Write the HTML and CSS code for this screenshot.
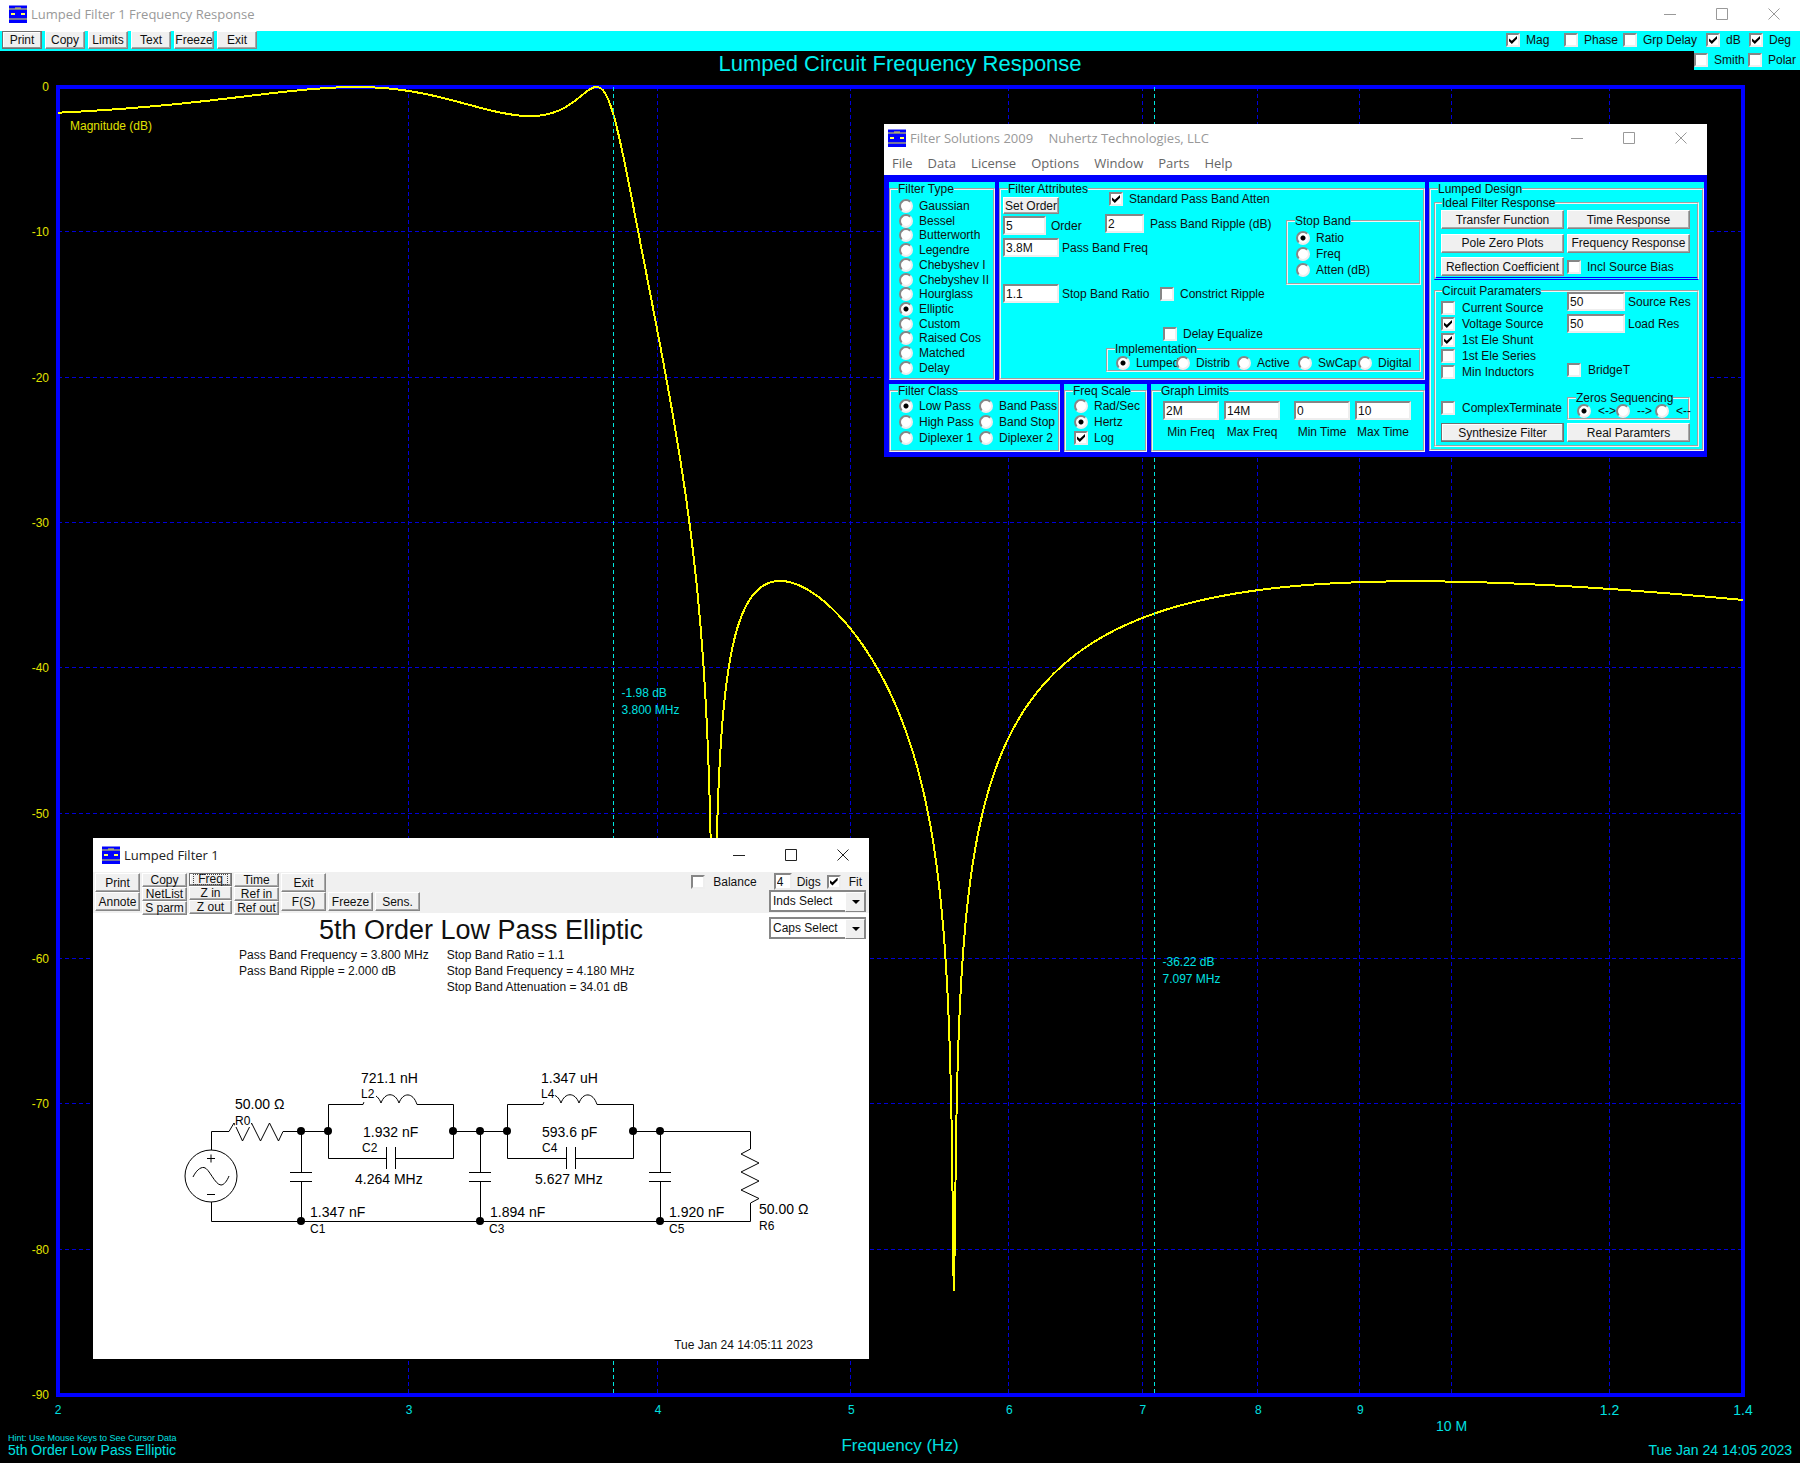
FILE: index.html
```
<!DOCTYPE html>
<html lang="en">

<head>
    <meta charset="UTF-8">
    <title>Lumped Filter 1 Frequency Response</title>
    <link rel="stylesheet" href="styles.css">
</head>

<body>
    <svg class="sprites" aria-hidden="true">
        <symbol id="icon-app" viewBox="0 0 18 18">
            <rect width="18" height="18" fill="#0000ff" />
            <path d="M0 .500h18" fill="none" stroke="#8080ff" />
            <path d="M0 4h18M0 14h18M6 3h6" fill="none" stroke="#e8e840" />
            <path d="M2 8h4v2H2zM12 8h4v2h-4z" fill="#ffff60" />
        </symbol>
        <symbol id="icon-min" viewBox="0 0 12 12">
            <path d="M0 6.500h12" fill="none" stroke="currentColor" />
        </symbol>
        <symbol id="icon-max" viewBox="0 0 12 12">
            <path d="M.5.5h11v11H.5z" fill="none" stroke="currentColor" />
        </symbol>
        <symbol id="icon-close" viewBox="0 0 12 12">
            <path d="M.5.500l11 11M11.500.500l-11 11" fill="none" stroke="currentColor" />
        </symbol>
    </svg>

    <!-- Frequency response window -->
    <main class="desktop">
        <header class="titlebar titlebar-main inactive">
            <svg class="app-icon"><use href="#icon-app" /></svg>
            <h1 class="window-title">Lumped Filter 1 Frequency Response</h1>
            <div class="window-controls">
                <button aria-label="Minimize"><svg><use href="#icon-min" /></svg></button>
                <button aria-label="Maximize"><svg><use href="#icon-max" /></svg></button>
                <button aria-label="Close"><svg><use href="#icon-close" /></svg></button>
            </div>
        </header>

        <div class="toolbar">
            <div class="toolbar-buttons">
                <button class="btn btn-default">Print</button>
                <button class="btn">Copy</button>
                <button class="btn">Limits</button>
                <button class="btn">Text</button>
                <button class="btn">Freeze</button>
                <button class="btn">Exit</button>
            </div>
            <div class="trace-options">
                <label class="opt"><input type="checkbox" checked>Mag</label>
                <label class="opt"><input type="checkbox">Phase</label>
                <label class="opt"><input type="checkbox">Grp Delay</label>
                <label class="opt"><input type="checkbox" checked>dB</label>
                <label class="opt"><input type="checkbox" checked>Deg</label>
            </div>
            <div class="plot-options">
                <label class="opt"><input type="checkbox">Smith</label>
                <label class="opt"><input type="checkbox">Polar</label>
            </div>
        </div>

        <section class="plot">
            <h2 class="plot-title">Lumped Circuit Frequency Response</h2>
            <svg id="chart" class="chart"></svg>
            <footer class="plot-footer">
                <div>
                    <p class="hint">Hint: Use Mouse Keys to See Cursor Data</p>
                    <p>5th Order Low Pass Elliptic</p>
                </div>
                <p class="axis-title">Frequency (Hz)</p>
                <p class="stamp">Tue Jan 24 14:05 2023</p>
            </footer>
        </section>
    </main>

    <!-- Filter Solutions window -->
    <section class="window solutions">
        <header class="titlebar inactive">
            <svg class="app-icon"><use href="#icon-app" /></svg>
            <h2 class="window-title">Filter Solutions 2009 <span class="company">Nuhertz Technologies, LLC</span></h2>
            <div class="window-controls">
                <button aria-label="Minimize"><svg><use href="#icon-min" /></svg></button>
                <button aria-label="Maximize"><svg><use href="#icon-max" /></svg></button>
                <button aria-label="Close"><svg><use href="#icon-close" /></svg></button>
            </div>
        </header>
        <nav class="menu">
            <a href="#">File</a>
            <a href="#">Data</a>
            <a href="#">License</a>
            <a href="#">Options</a>
            <a href="#">Window</a>
            <a href="#">Parts</a>
            <a href="#">Help</a>
        </nav>

        <div class="solutions-body">
            <div class="solutions-left">
                <div class="row-top">
                    <div class="panel">
                        <fieldset class="group filter-type">
                            <legend>Filter Type</legend>
                            <label class="opt"><input type="radio" name="type">Gaussian</label>
                            <label class="opt"><input type="radio" name="type">Bessel</label>
                            <label class="opt"><input type="radio" name="type">Butterworth</label>
                            <label class="opt"><input type="radio" name="type">Legendre</label>
                            <label class="opt"><input type="radio" name="type">Chebyshev I</label>
                            <label class="opt"><input type="radio" name="type">Chebyshev II</label>
                            <label class="opt"><input type="radio" name="type">Hourglass</label>
                            <label class="opt"><input type="radio" name="type" checked>Elliptic</label>
                            <label class="opt"><input type="radio" name="type">Custom</label>
                            <label class="opt"><input type="radio" name="type">Raised Cos</label>
                            <label class="opt"><input type="radio" name="type">Matched</label>
                            <label class="opt"><input type="radio" name="type">Delay</label>
                        </fieldset>
                    </div>

                    <div class="panel">
                        <fieldset class="group attributes">
                            <legend>Filter Attributes</legend>
                            <div class="attr-top">
                                <div class="attr-col">
                                    <button class="btn btn-order">Set Order</button>
                                    <label class="field field-order"><input class="text short" type="text" value="5">Order</label>
                                    <label class="field"><input class="text" type="text" value="3.8M">Pass Band Freq</label>
                                </div>
                                <div class="attr-col attr-ripple">
                                    <label class="opt"><input type="checkbox" checked>Standard Pass Band Atten</label>
                                    <label class="field"><input class="text ripple" type="text" value="2">Pass Band Ripple (dB)</label>
                                </div>
                                <fieldset class="group stop-band">
                                    <legend>Stop Band</legend>
                                    <label class="opt"><input type="radio" name="stop" checked>Ratio</label>
                                    <label class="opt"><input type="radio" name="stop">Freq</label>
                                    <label class="opt"><input type="radio" name="stop">Atten (dB)</label>
                                </fieldset>
                            </div>
                            <div class="attr-mid">
                                <label class="field"><input class="text" type="text" value="1.1">Stop Band Ratio</label>
                                <label class="opt"><input type="checkbox">Constrict Ripple</label>
                            </div>
                            <div class="attr-delay">
                                <label class="opt"><input type="checkbox">Delay Equalize</label>
                            </div>
                            <fieldset class="group implementation">
                                <legend>Implementation</legend>
                                <label class="opt"><input type="radio" name="impl" checked>Lumped</label>
                                <label class="opt"><input type="radio" name="impl">Distrib</label>
                                <label class="opt"><input type="radio" name="impl">Active</label>
                                <label class="opt"><input type="radio" name="impl">SwCap</label>
                                <label class="opt"><input type="radio" name="impl">Digital</label>
                            </fieldset>
                        </fieldset>
                    </div>
                </div>

                <div class="row-bottom">
                    <div class="panel">
                        <fieldset class="group filter-class">
                            <legend>Filter Class</legend>
                            <label class="opt"><input type="radio" name="class" checked>Low Pass</label>
                            <label class="opt"><input type="radio" name="class">Band Pass</label>
                            <label class="opt"><input type="radio" name="class">High Pass</label>
                            <label class="opt"><input type="radio" name="class">Band Stop</label>
                            <label class="opt"><input type="radio" name="class">Diplexer 1</label>
                            <label class="opt"><input type="radio" name="class">Diplexer 2</label>
                        </fieldset>
                    </div>
                    <div class="panel">
                        <fieldset class="group freq-scale">
                            <legend>Freq Scale</legend>
                            <label class="opt"><input type="radio" name="scale">Rad/Sec</label>
                            <label class="opt"><input type="radio" name="scale" checked>Hertz</label>
                            <label class="opt"><input type="checkbox" checked>Log</label>
                        </fieldset>
                    </div>
                    <div class="panel">
                        <fieldset class="group graph-limits">
                            <legend>Graph Limits</legend>
                            <div class="limits">
                                <label><input class="text" type="text" value="2M">Min Freq</label>
                                <label><input class="text" type="text" value="14M">Max Freq</label>
                            </div>
                            <div class="limits">
                                <label><input class="text" type="text" value="0">Min Time</label>
                                <label><input class="text" type="text" value="10">Max Time</label>
                            </div>
                        </fieldset>
                    </div>
                </div>
            </div>

            <div class="panel">
                <fieldset class="group design">
                    <legend>Lumped Design</legend>
                    <fieldset class="group ideal">
                        <legend>Ideal Filter Response</legend>
                        <button class="btn">Transfer Function</button>
                        <button class="btn">Time Response</button>
                        <button class="btn">Pole Zero Plots</button>
                        <button class="btn">Frequency Response</button>
                        <button class="btn">Reflection Coefficient</button>
                        <label class="opt"><input type="checkbox">Incl Source Bias</label>
                    </fieldset>
                    <fieldset class="group circuit">
                        <legend>Circuit Paramaters</legend>
                        <div class="circuit-col">
                            <label class="opt"><input type="checkbox">Current Source</label>
                            <label class="opt"><input type="checkbox" checked>Voltage Source</label>
                            <label class="opt"><input type="checkbox" checked>1st Ele Shunt</label>
                            <label class="opt"><input type="checkbox">1st Ele Series</label>
                            <label class="opt"><input type="checkbox">Min Inductors</label>
                            <label class="opt complex"><input type="checkbox">ComplexTerminate</label>
                            <button class="btn btn-default">Synthesize Filter</button>
                        </div>
                        <div class="circuit-col circuit-res">
                            <label class="field"><input class="text" type="text" value="50">Source Res</label>
                            <label class="field"><input class="text" type="text" value="50">Load Res</label>
                            <label class="opt bridge"><input type="checkbox">BridgeT</label>
                            <fieldset class="group zeros">
                                <legend>Zeros Sequencing</legend>
                                <label class="opt"><input type="radio" name="zeros" checked>&lt;-&gt;</label>
                                <label class="opt"><input type="radio" name="zeros">--&gt;</label>
                                <label class="opt"><input type="radio" name="zeros">&lt;--</label>
                            </fieldset>
                            <button class="btn">Real Paramters</button>
                        </div>
                    </fieldset>
                </fieldset>
            </div>
        </div>
    </section>

    <!-- Schematic window -->
    <section class="window schematic">
        <header class="titlebar">
            <svg class="app-icon"><use href="#icon-app" /></svg>
            <h2 class="window-title">Lumped Filter 1</h2>
            <div class="window-controls">
                <button aria-label="Minimize"><svg><use href="#icon-min" /></svg></button>
                <button aria-label="Maximize"><svg><use href="#icon-max" /></svg></button>
                <button aria-label="Close"><svg><use href="#icon-close" /></svg></button>
            </div>
        </header>

        <div class="schematic-bar">
            <div class="btn-col">
                <button class="btn">Print</button>
                <button class="btn">Annote</button>
            </div>
            <div class="btn-col btn-stack">
                <button class="btn">Copy</button>
                <button class="btn">NetList</button>
                <button class="btn">S parm</button>
            </div>
            <div class="btn-col btn-stack btn-narrow">
                <button class="btn btn-default btn-focus"><span>Freq</span></button>
                <button class="btn">Z in</button>
                <button class="btn">Z out</button>
            </div>
            <div class="btn-col btn-stack">
                <button class="btn">Time</button>
                <button class="btn">Ref in</button>
                <button class="btn">Ref out</button>
            </div>
            <div class="btn-col">
                <button class="btn">Exit</button>
                <button class="btn">F(S)</button>
            </div>
            <div class="btn-col btn-low">
                <button class="btn">Freeze</button>
            </div>
            <div class="btn-col btn-low">
                <button class="btn">Sens.</button>
            </div>
            <div class="schematic-options">
                <div class="fit-options">
                    <label class="opt balance"><input type="checkbox">Balance</label>
                    <label class="field"><input class="text digs" type="text" value="4">Digs</label>
                    <label class="opt"><input type="checkbox" checked>Fit</label>
                </div>
                <div class="select">
                    <select aria-label="Inductors">
                        <option>Inds Select</option>
                    </select>
                </div>
                <div class="select">
                    <select aria-label="Capacitors">
                        <option>Caps Select</option>
                    </select>
                </div>
            </div>
        </div>

        <h3 class="schematic-title">5th Order Low Pass Elliptic</h3>
        <div class="specs">
            <ul>
                <li>Pass Band Frequency = 3.800 MHz</li>
                <li>Pass Band Ripple = 2.000 dB</li>
            </ul>
            <ul>
                <li>Stop Band Ratio = 1.1</li>
                <li>Stop Band Frequency = 4.180 MHz</li>
                <li>Stop Band Attenuation = 34.01 dB</li>
            </ul>
        </div>

        <svg class="circuit-drawing" viewBox="0 0 776 190">
            <g class="wires">
                <!-- source and R0 -->
                <circle cx="118" cy="117" r="26" />
                <path d="M114 99.500h8M118 95.500v8M114 135.500h8" />
                <path d="M100 118C103 112 107 108 111 108.500C116 109 122 126 128 126C131 126 134 122 136 117" />
                <path d="M118.500 91V72.500H136L141 64L143 68L149.500 82L158.500 64L167.500 82L176.500 64L185.500 82L190 72.500H235" />
                <path d="M118.500 143V162.500H657.500V144L666 139.500L648 131L666 122L648 113L666 104L648 95L657.500 90V72.500H540" />
                <path d="M360 72.500H414" />
                <!-- L2 / C2 -->
                <path d="M293 99.500H235.500V45.500H270C274 33 284 33 288 44C292 33 302 33 306 44C310 33 320 33 324 45.500H360.500V99.500H303" />
                <path d="M293.500 88V110M302.500 88V110" />
                <!-- L4 / C4 -->
                <path d="M473 99.500H414.500V45.500H450C454 33 464 33 468 44C472 33 482 33 486 44C490 33 500 33 504 45.500H540.500V99.500H483" />
                <path d="M473.500 88V110M482.500 88V110" />
                <!-- C1, C3, C5 -->
                <path d="M208.500 72V113M197 113.500H219M197 122.500H219M208.500 122V162" />
                <path d="M387.500 72V113M376 113.500H398M376 122.500H398M387.500 122V162" />
                <path d="M567.500 72V113M556 113.500H578M556 122.500H578M567.500 122V162" />
            </g>
            <g class="label-masks">
                <rect x="142" y="56" width="16" height="12" />
                <rect x="269" y="30" width="14" height="13" />
                <rect x="448" y="30" width="14" height="13" />
            </g>
            <g class="nodes">
                <circle cx="208" cy="72" r="4" />
                <circle cx="235" cy="72" r="4" />
                <circle cx="360" cy="72" r="4" />
                <circle cx="387" cy="72" r="4" />
                <circle cx="414" cy="72" r="4" />
                <circle cx="540" cy="72" r="4" />
                <circle cx="567" cy="72" r="4" />
                <circle cx="208" cy="162" r="4" />
                <circle cx="387" cy="162" r="4" />
                <circle cx="567" cy="162" r="4" />
            </g>
            <g class="values">
                <text x="142" y="50">50.00 Ω</text>
                <text x="268" y="24">721.1 nH</text>
                <text x="270" y="78">1.932 nF</text>
                <text x="262" y="125">4.264 MHz</text>
                <text x="448" y="24">1.347 uH</text>
                <text x="449" y="78">593.6 pF</text>
                <text x="442" y="125">5.627 MHz</text>
                <text x="217" y="158">1.347 nF</text>
                <text x="397" y="158">1.894 nF</text>
                <text x="576" y="158">1.920 nF</text>
                <text x="666" y="155">50.00 Ω</text>
            </g>
            <g class="refs">
                <text x="142" y="66">R0</text>
                <text x="268" y="39">L2</text>
                <text x="269" y="93">C2</text>
                <text x="448" y="39">L4</text>
                <text x="449" y="93">C4</text>
                <text x="217" y="174">C1</text>
                <text x="396" y="174">C3</text>
                <text x="576" y="174">C5</text>
                <text x="666" y="171">R6</text>
            </g>
        </svg>
        <p class="schematic-stamp">Tue Jan 24 14:05:11 2023</p>
    </section>

    <script src="chart.js"></script>
</body>

</html>
```
FILE: styles.css
```
:root {
    --cyan: #00ffff;
    --blue: #0000ff;
    --face: #f0f0f0;
    --shadow: #868686;
    --plot-text: #00e0e0;
    --ui-font: "Liberation Sans", Arial, sans-serif;
    --title-font: "Open Sans", "Noto Sans", sans-serif;
}

* {
    margin: 0;
    padding: 0;
    box-sizing: border-box;
}

body {
    font-family: var(--ui-font);
    font-size: 12px;
    line-height: 14px;
    color: #101010;
    background: #000;
    min-height: 100vh;
    overflow: hidden;
}

button,
input,
select {
    font: inherit;
    color: inherit;
    border: none;
    border-radius: 0;
}

h1,
h2,
h3 {
    font-weight: normal;
}

ul {
    list-style: none;
}

.sprites {
    display: none;
}

/* Title bars */
.titlebar {
    display: flex;
    align-items: center;
    height: 28px;
    padding-left: 4px;
    gap: 4px;
    background: #fff;
    color: #222;
}

.titlebar.inactive {
    color: #999;
}

.titlebar-main {
    height: 31px;
    padding: 0 0 4px 9px;
}

.app-icon {
    width: 18px;
    height: 18px;
}

.window-title {
    flex: 1;
    font-family: var(--title-font);
    font-size: 13px;
    line-height: 18px;
}

.company {
    margin-left: 12px;
}

.window-controls {
    display: flex;
}

.window-controls button {
    width: 52px;
    height: 24px;
    background: none;
}

.window-controls svg {
    display: block;
    width: 12px;
    height: 12px;
    margin: 0 auto;
}

/* Controls */
.btn {
    background: var(--face);
    border: 1px solid;
    border-color: #fff var(--shadow) var(--shadow) #fff;
    box-shadow: inset -1px -1px 0 #a8a8a8;
    height: 19px;
    line-height: 14px;
    white-space: nowrap;
}

.btn-default {
    border-color: #707070;
    box-shadow: inset -1px -1px 0 #909090, inset 1px 1px 0 #fff;
}

.opt {
    display: flex;
    align-items: center;
    gap: 6px;
    white-space: nowrap;
}

input[type="checkbox"],
input[type="radio"] {
    appearance: none;
    flex: none;
    width: 14px;
    height: 14px;
    background: #fff;
    border: 2px solid;
    border-color: var(--shadow) #eee #eee var(--shadow);
}

input[type="checkbox"]:checked::after {
    content: "";
    display: block;
    width: 8px;
    height: 8px;
    margin: 1px;
    background: #000;
    clip-path: polygon(0 30%, 35% 60%, 100% 0, 100% 35%, 35% 100%, 0 65%);
}

input[type="radio"] {
    border-radius: 50%;
}

input[type="radio"]:checked {
    background: radial-gradient(circle, #000 2px, #fff 3px);
}

.field {
    display: flex;
    align-items: center;
    gap: 3px;
    white-space: nowrap;
}

.text {
    width: 56px;
    height: 19px;
    padding: 0 1px;
    background: #fff;
    border: 2px solid;
    border-color: var(--shadow) #eee #eee var(--shadow);
}

.panel {
    background: var(--cyan);
}

.group {
    min-width: 0;
    height: 100%;
    border: 2px groove #f4f4f4;
}

.group legend {
    margin-left: -1px;
    height: 14px;
    background: var(--cyan);
}

/* Response toolbar */
.desktop {
    display: flex;
    flex-direction: column;
    height: 100vh;
}

.toolbar {
    position: relative;
    display: flex;
    justify-content: space-between;
    height: 20px;
    background: var(--cyan);
}

.toolbar-buttons {
    display: flex;
    gap: 3px;
    padding-left: 2px;
}

.toolbar-buttons .btn {
    width: 40px;
    height: 18px;
}

.trace-options {
    display: grid;
    grid-template-columns: 58px 59px 83px 43px 51px;
    height: 18px;
}

.plot-options {
    position: absolute;
    top: 20px;
    right: 0;
    display: grid;
    grid-template-columns: 54px 52px;
    height: 19px;
    padding-bottom: 2px;
    background: var(--cyan);
}

/* Plot */
.plot {
    flex: 1;
    display: flex;
    flex-direction: column;
    color: var(--plot-text);
}

.plot-title {
    height: 26px;
    font-size: 22px;
    line-height: 26px;
    text-align: center;
    color: #00f0f0;
}

.chart {
    flex: 1;
    min-height: 0;
    width: 100%;
}

.chart text {
    fill: var(--plot-text);
}

.chart .large {
    font-size: 14px;
}

.chart .level {
    fill: #e0e000;
}

.chart .frame {
    fill: none;
    stroke: var(--blue);
    stroke-width: 4;
}

.chart .grid {
    stroke: #0000d8;
    stroke-dasharray: 4 3;
}

.chart .cursor {
    stroke: #00e8e0;
    stroke-dasharray: 4 3;
}

.chart .trace {
    fill: none;
    stroke: #ffff00;
    stroke-width: 2;
    shape-rendering: crispEdges;
}

.plot-footer {
    display: grid;
    grid-template-columns: 1fr auto 1fr;
    align-items: end;
    height: 30px;
    padding: 0 8px 7px;
    font-size: 14px;
}

.hint {
    font-size: 9px;
    line-height: 10px;
}

.axis-title {
    font-size: 17px;
    line-height: 22px;
}

.stamp {
    text-align: right;
}

/* Floating windows */
.window {
    position: absolute;
    background: #fff;
}

.solutions {
    left: 884px;
    top: 124px;
    width: 823px;
}

.menu {
    display: flex;
    gap: 15px;
    height: 23px;
    padding-left: 8px;
    font-family: var(--title-font);
    font-size: 13px;
    line-height: 23px;
}

.menu a {
    color: #666;
    text-decoration: none;
}

.solutions-body {
    display: grid;
    grid-template-columns: 1fr 275px;
    gap: 4px;
    padding: 7px 3px 6px 5px;
    background: var(--blue);
}

.solutions-left {
    display: flex;
    flex-direction: column;
    gap: 4px;
}

.row-top {
    display: grid;
    grid-template-columns: 106px 1fr;
    gap: 4px;
    height: 198px;
}

.row-bottom {
    display: grid;
    grid-template-columns: 171px 83px 1fr;
    gap: 4px;
    height: 67px;
}

.filter-type {
    display: flex;
    flex-direction: column;
    justify-content: space-between;
    padding: 3px 0 3px 8px;
}

.attributes {
    padding: 0 2px;
}

.attributes > legend {
    margin-left: 5px;
}

.attr-top {
    display: grid;
    grid-template-columns: 102px 1fr 135px;
    height: 86px;
}

.attr-col {
    display: flex;
    flex-direction: column;
    align-items: flex-start;
    gap: 3px;
    padding-top: 1px;
}

.btn-order {
    width: 56px;
    height: 17px;
}

.short {
    width: 43px;
}

.field-order {
    gap: 5px;
    margin-top: -1px;
}

.attr-ripple {
    gap: 8px;
    padding: 0;
}

.attr-ripple .opt {
    margin: -4px 0 0 4px;
}

.attr-ripple .field {
    gap: 6px;
}

.ripple {
    width: 39px;
}

.stop-band {
    height: 71px;
    margin-top: 18px;
    padding: 2px 8px;
}

.stop-band .opt {
    height: 16px;
}

.attr-mid {
    display: grid;
    grid-template-columns: 157px 1fr;
    align-items: center;
    margin-top: 2px;
}

.attr-delay {
    margin: 24px 0 0 160px;
}

.implementation {
    display: grid;
    grid-template-columns: 60px 61px 61px 60px 1fr;
    height: 30px;
    margin: 1px 0 0 103px;
    padding: 0 0 0 8px;
}

.implementation .opt {
    height: 14px;
}

.filter-class {
    display: grid;
    grid-template-columns: 80px 1fr;
    padding: 0 0 4px 8px;
}

.freq-scale {
    padding: 0 0 4px 8px;
}

.freq-scale .opt {
    height: 16px;
}

.graph-limits {
    display: flex;
    justify-content: space-between;
    padding: 3px 12px 0 10px;
}

.graph-limits legend {
    margin-left: -2px;
}

.limits {
    display: flex;
    gap: 5px;
}

.limits label {
    width: 56px;
    text-align: center;
}

.limits .text {
    display: block;
    margin-bottom: 5px;
}

.design {
    padding: 0 3px;
}

.design > legend {
    margin-left: 4px;
}

.ideal,
.circuit {
    display: grid;
    grid-template-columns: 123px 123px;
    gap: 4px 3px;
    padding: 0 5px;
}

.ideal {
    height: 84px;
    border-bottom: 3px double var(--blue);
}

.circuit {
    height: 163px;
    margin-top: 4px;
}

.ideal legend,
.circuit > legend {
    margin-left: 1px;
}

.circuit-col {
    display: flex;
    flex-direction: column;
    height: 144px;
    padding-top: 2px;
}

.circuit-col .opt {
    height: 16px;
    gap: 7px;
}

.circuit-col .btn {
    margin-top: auto;
}

.circuit-col .complex {
    margin-top: 20px;
}

.circuit-res {
    gap: 3px;
    height: 150px;
    margin-top: -6px;
    padding-top: 0;
}

.circuit-res .text {
    width: 58px;
}

.circuit-res .bridge {
    margin-top: 26px;
}

.zeros {
    display: grid;
    grid-template-columns: 39px 39px 1fr;
    height: 29px;
    margin-top: 10px;
    padding: 0 0 0 8px;
}

.zeros .opt {
    height: 12px;
}

/* Schematic window */
.schematic {
    left: 93px;
    top: 838px;
    width: 776px;
    min-height: 521px;
}

.schematic .titlebar {
    height: 34px;
    padding-left: 9px;
}

.schematic-bar {
    display: flex;
    gap: 2px;
    height: 41px;
    padding: 1px 3px 0 2px;
    background: var(--face);
}

.btn-col {
    display: flex;
    flex-direction: column;
    justify-content: space-between;
    width: 45px;
    height: 38px;
}

.btn-stack {
    height: 41px;
}

.btn-stack .btn {
    height: 14px;
    line-height: 12px;
}

.btn-narrow {
    width: 43px;
}

.btn-focus span {
    display: block;
    height: 9px;
    margin: 0 4px;
    line-height: 9px;
    outline: 1px dotted #444;
}

.btn-low {
    justify-content: flex-end;
}

.schematic-options {
    flex: 1;
    display: flex;
    flex-direction: column;
    align-items: flex-end;
    height: 67px;
}

.fit-options {
    display: flex;
    align-items: center;
    gap: 6px;
    height: 17px;
    padding-right: 4px;
}

.fit-options .opt {
    gap: 8px;
}

.fit-options .field {
    gap: 5px;
}

.fit-options .balance {
    margin-right: 11px;
}

.digs {
    width: 18px;
    height: 17px;
}

.select {
    position: relative;
    width: 97px;
    margin-bottom: 5px;
    border: 2px solid var(--shadow);
    border-right-width: 1px;
}

.select select {
    appearance: none;
    display: block;
    width: 100%;
    height: 18px;
    padding-left: 2px;
    background: #fff;
}

.select::before {
    content: "";
    position: absolute;
    top: 0;
    right: 0;
    width: 18px;
    height: 18px;
    background: var(--face);
    border: 1px solid;
    border-color: #fff var(--shadow) var(--shadow) #fff;
    pointer-events: none;
}

.select::after {
    content: "";
    position: absolute;
    top: 8px;
    right: 5px;
    border: 4px solid transparent;
    border-top-color: #000;
    pointer-events: none;
}

.schematic-title {
    margin-top: 1px;
    font-size: 27px;
    line-height: 32px;
    text-align: center;
}

.specs {
    display: flex;
    gap: 18px;
    height: 48px;
    margin-top: 1px;
    padding-left: 146px;
    line-height: 16px;
}

.circuit-drawing {
    display: block;
    width: 100%;
    margin-top: 64px;
}

.wires {
    fill: none;
    stroke: #000;
}

.label-masks {
    fill: #fff;
}

.values {
    font-size: 14px;
}

.refs {
    font-size: 12px;
}

.schematic-stamp {
    margin-top: 89px;
    padding-right: 56px;
    text-align: right;
}
```
FILE: chart.js
```
const chart = document.getElementById('chart');

const FMIN = 2e6;
const FMAX = 14e6;
const DB_MIN = -90;
const TRACE_FLOOR = -82.8;
const R = 50;

// ladder elements in order, source to load
const ladder = [
    { c: 1.347e-9 },
    { l: 721.1e-9, cp: 1.932e-9 },
    { c: 1.894e-9 },
    { l: 1.347e-6, cp: 593.6e-12 },
    { c: 1.920e-9 }
];

// gain in dB of the lossless ladder between equal terminations
function gain(f) {
    const w = 2 * Math.PI * f;
    let a = 1, b = 0, c = 0, d = 1;
    ladder.forEach(e => {
        if (e.c) {
            a -= b * w * e.c;
            c += d * w * e.c;
        } else {
            const x = w * e.l / (1 - w * w * e.l * e.cp);
            b += a * x;
            d -= c * x;
        }
    });
    const re = a + d;
    const im = b / R + c * R;
    return 10 * Math.log10(4 / (re * re + im * im));
}

function add(tag, attrs, text) {
    const el = document.createElementNS('http://www.w3.org/2000/svg', tag);
    for (const key in attrs) {
        el.setAttribute(key, attrs[key]);
    }
    if (text) {
        el.textContent = text;
    }
    chart.appendChild(el);
}

function draw() {
    chart.innerHTML = '';
    const box = chart.getBoundingClientRect();
    const left = 58;
    const top = 10;
    const right = box.width - 57;
    const bottom = box.height - 38;
    const span = Math.log(FMAX / FMIN);
    const px = f => left + (right - left) * Math.log(f / FMIN) / span;
    const py = db => top + (bottom - top) * db / DB_MIN;

    for (let db = -10; db > DB_MIN; db -= 10) {
        const y = Math.round(py(db)) - 0.5;
        add('line', { class: 'grid', x1: left, x2: right, y1: y, y2: y });
    }
    for (let db = 0; db >= DB_MIN; db -= 10) {
        add('text', { class: 'level', x: left - 9, y: py(db) + 4, 'text-anchor': 'end' }, String(db));
    }

    [3, 4, 5, 6, 7, 8, 9, 10, 12].forEach(mhz => {
        const x = Math.round(px(mhz * 1e6)) - 0.5;
        add('line', { class: 'grid', x1: x, x2: x, y1: top, y2: bottom });
    });
    for (let mhz = 2; mhz < 10; mhz++) {
        add('text', { x: px(mhz * 1e6), y: bottom + 19, 'text-anchor': 'middle' }, String(mhz));
    }
    add('text', { class: 'large', x: px(10e6), y: bottom + 36, 'text-anchor': 'middle' }, '10 M');
    add('text', { class: 'large', x: px(12e6), y: bottom + 20, 'text-anchor': 'middle' }, '1.2');
    add('text', { class: 'large', x: px(14e6), y: bottom + 20, 'text-anchor': 'middle' }, '1.4');

    add('rect', { class: 'frame', x: left, y: top, width: right - left, height: bottom - top });

    const freqs = [4.264e6, 5.627e6];
    for (let x = left; x <= right; x++) {
        freqs.push(FMIN * Math.exp(span * (x - left) / (right - left)));
    }
    freqs.sort((a, b) => a - b);
    const points = freqs.map(f => {
        const notch = f === 4.264e6 || f === 5.627e6;
        const db = notch ? TRACE_FLOOR : Math.max(gain(f), TRACE_FLOOR);
        return px(f).toFixed(1) + ',' + py(db).toFixed(1);
    });
    add('polyline', { class: 'trace', points: points.join(' ') });
    add('text', { class: 'level', x: left + 12, y: top + 43 }, 'Magnitude (dB)');

    const cursors = [
        { f: 3.8e6, db: '-1.98 dB', label: '3.800 MHz', at: -42 },
        { f: 7.097e6, db: '-36.22 dB', label: '7.097 MHz', at: -60.5 }
    ];
    cursors.forEach(c => {
        const x = Math.round(px(c.f)) - 0.5;
        add('line', { class: 'cursor', x1: x, x2: x, y1: top, y2: bottom });
        add('text', { x: x + 8, y: py(c.at) }, c.db);
        add('text', { x: x + 8, y: py(c.at) + 17 }, c.label);
    });
}

draw();
window.addEventListener('resize', draw);
```
